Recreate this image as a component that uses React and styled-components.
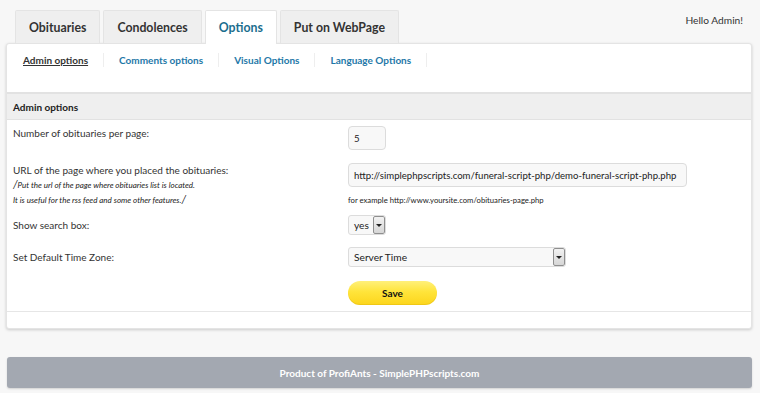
import styled, { createGlobalStyle } from "styled-components";

const GlobalStyle = createGlobalStyle`
  html, body {
    margin: 0;
    padding: 0;
    background: #f7f7f7;
  }
  body {
    font-family: Lato, "Open Sans", Arial, sans-serif;
    color: #333;
  }
`;

const Page = styled.div`
  width: 760px;
  height: 393px;
  padding: 10px 8px 0 6px;
  box-sizing: border-box;
  overflow: hidden;
`;

const TopBar = styled.div`
  display: flex;
  align-items: flex-start;
  justify-content: space-between;
  height: 33px;
  padding-left: 9px;
  position: relative;
  z-index: 2;
`;

const Tabs = styled.div`
  display: flex;
  gap: 3px;
`;

const Tab = styled.div`
  box-sizing: border-box;
  padding: 0 13px;
  display: flex;
  align-items: center;
  font-size: 12.3px;
  font-weight: 700;
  border: 1px solid #e4e4e4;
  border-bottom: none;
  background: ${(p) => (p.active ? "#ffffff" : "#efefef")};
  color: ${(p) => (p.active ? "#1b6e8e" : "#333")};
  height: ${(p) => (p.active ? "34px" : "33px")};
  border-radius: 2px 2px 0 0;
`;

const Hello = styled.div`
  font-size: 10.2px;
  margin-top: 4px;
  margin-right: 9px;
  color: #333;
`;

const Panel = styled.div`
  background: #fff;
  border: 1px solid #e4e4e4;
  border-radius: 3px;
  box-shadow: 0 1px 3px rgba(0, 0, 0, 0.18);
  position: relative;
  z-index: 1;
`;

const SubNav = styled.div`
  display: flex;
  align-items: flex-start;
  height: 48px;
  padding: 9px 0 0 16px;
  box-sizing: border-box;
`;

const SubLink = styled.a`
  font-size: 10px;
  font-weight: 700;
  padding: 0 15px 0 0;
  margin-right: 15px;
  border-right: 1px solid #eeeeee;
  line-height: 14px;
  color: ${(p) => (p.active ? "#333" : "#1e78a8")};
  text-decoration: ${(p) => (p.active ? "underline" : "none")};
  cursor: pointer;
`;

const SectionHead = styled.div`
  background: #efefef;
  border-top: 2px solid #e2e2e2;
  border-bottom: 1px solid #e2e2e2;
  height: 25px;
  display: flex;
  align-items: center;
  padding-left: 6px;
  font-size: 10px;
  font-weight: 700;
  color: #222;
`;

const Form = styled.form`
  padding: 6px 0 0 6px;
`;

const Row = styled.div`
  display: grid;
  grid-template-columns: 335px 1fr;
  align-items: ${(p) => (p.center ? "center" : "start")};
  margin-bottom: ${(p) => p.gap ?? 12}px;
`;

const Label = styled.div`
  font-size: 10px;
  line-height: 14px;
  padding-top: ${(p) => p.offset || 0}px;
`;

const Hint = styled.div`
  font-size: 8px;
  font-style: italic;
  line-height: 14px;
  color: #222;
`;

const Slash = styled.span`
  font-size: 11px;
  font-style: italic;
`;

const Field = styled.div`
  display: flex;
  flex-direction: column;
  align-items: flex-start;
`;

const Input = styled.input`
  box-sizing: border-box;
  height: 24px;
  width: ${(p) => p.w}px;
  border: 1px solid #dcdcdc;
  border-radius: 4px;
  background: #f8f8f8;
  padding: 0 4px 0 5px;
  font-family: Lato, Arial, sans-serif;
  font-size: 9.6px;
  color: #222;
  outline: none;
`;

const Example = styled.div`
  font-size: 7.7px;
  margin-top: 8px;
  color: #222;
`;

const SelectBox = styled.div`
  display: inline-flex;
  box-sizing: border-box;
  width: ${(p) => p.w}px;
  height: 20px;
  border: 1px solid #dcdcdc;
  border-radius: 3px;
  background: #f8f8f8;
  overflow: hidden;
`;

const SelectValue = styled.div`
  flex: 1;
  display: flex;
  align-items: center;
  padding-left: 5px;
  font-size: 10.2px;
  color: #222;
`;

const ArrowBtn = styled.div`
  width: 12px;
  box-sizing: border-box;
  border: 1px solid #8f8f8f;
  border-radius: 2px;
  background: linear-gradient(#f2f2f2, #d6d6d6);
  display: flex;
  align-items: center;
  justify-content: center;
  &::after {
    content: "";
    border-left: 3px solid transparent;
    border-right: 3px solid transparent;
    border-top: 3px solid #222;
  }
`;

const SaveButton = styled.button`
  width: 89px;
  height: 24px;
  border: none;
  border-radius: 12px;
  background: linear-gradient(#fff07a 0%, #ffe43a 45%, #fcd51c 100%);
  box-shadow: inset 0 -1px 0 rgba(200, 160, 0, 0.25);
  font-family: Lato, Arial, sans-serif;
  font-size: 10px;
  font-weight: 700;
  color: #111;
  cursor: pointer;
`;

const Divider = styled.div`
  border-top: 1px solid #e6e6e6;
  margin-top: 6px;
  height: 16px;
`;

const Footer = styled.div`
  margin-top: 28px;
  margin-left: 1px;
  height: 31px;
  border-radius: 3px;
  background: #a3a8b1;
  box-shadow: 0 1px 2px rgba(0, 0, 0, 0.15);
  display: flex;
  align-items: center;
  justify-content: center;
  color: #fff;
  font-size: 10px;
  font-weight: 700;
`;

export default function App() {
  return (
    <>
      <GlobalStyle />
      <Page>
        <TopBar>
          <Tabs>
            <Tab>Obituaries</Tab>
            <Tab>Condolences</Tab>
            <Tab active>Options</Tab>
            <Tab>Put on WebPage</Tab>
          </Tabs>
          <Hello>Hello Admin!</Hello>
        </TopBar>
        <Panel>
          <SubNav>
            <SubLink active>Admin options</SubLink>
            <SubLink>Comments options</SubLink>
            <SubLink>Visual Options</SubLink>
            <SubLink>Language Options</SubLink>
          </SubNav>
          <SectionHead>Admin options</SectionHead>
          <Form onSubmit={(e) => e.preventDefault()}>
            <Row gap={13}>
              <Label offset={-3}>Number of obituaries per page:</Label>
              <Field>
                <Input w={38} defaultValue="5" />
              </Field>
            </Row>
            <Row gap={8}>
              <Label>
                URL of the page where you placed the obituaries:
                <Hint>
                  <Slash>/</Slash>Put the url of the page where obituaries list is located.
                </Hint>
                <Hint>
                  It is useful for the rss feed and some other features.<Slash>/</Slash>
                </Hint>
              </Label>
              <Field>
                <Input
                  w={339}
                  defaultValue="http://simplephpscripts.com/funeral-script-php/demo-funeral-script-php.php"
                />
                <Example>for example http://www.yoursite.com/obituaries-page.php</Example>
              </Field>
            </Row>
            <Row center gap={12}>
              <Label>Show search box:</Label>
              <Field>
                <SelectBox w={38}>
                  <SelectValue>yes</SelectValue>
                  <ArrowBtn />
                </SelectBox>
              </Field>
            </Row>
            <Row center gap={14}>
              <Label>Set Default Time Zone:</Label>
              <Field>
                <SelectBox w={218}>
                  <SelectValue>Server Time</SelectValue>
                  <ArrowBtn />
                </SelectBox>
              </Field>
            </Row>
            <Row gap={0}>
              <div />
              <Field>
                <SaveButton type="submit">Save</SaveButton>
              </Field>
            </Row>
          </Form>
          <Divider />
        </Panel>
        <Footer>Product of ProfiAnts - SimplePHPscripts.com</Footer>
      </Page>
    </>
  );
}
